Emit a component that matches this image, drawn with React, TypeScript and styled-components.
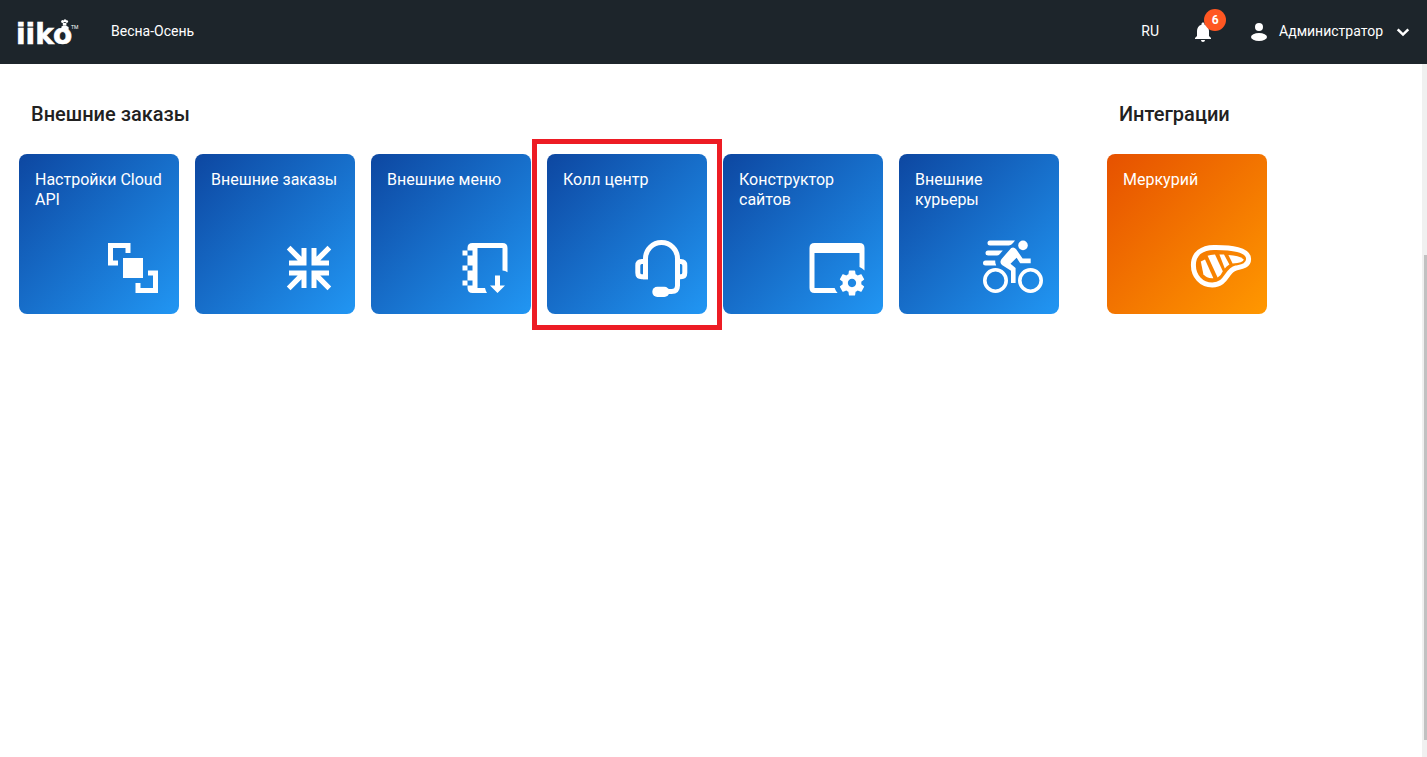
import React from "react";
import styled, { createGlobalStyle } from "styled-components";

const GlobalStyle = createGlobalStyle`
  * { box-sizing: border-box; }
  body {
    margin: 0;
    background: #fff;
    color: #212121;
    font-family: Roboto, "Liberation Sans", sans-serif;
  }
`;

const Page = styled.div`
  display: flex;
  flex-direction: column;
  min-height: 100vh;
`;

const TopBar = styled.header`
  display: flex;
  align-items: center;
  height: 64px;
  padding: 0 12px 0 16px;
  background: #1d252b;
  color: #fff;
  font-size: 14px;
  line-height: 20px;
`;

const LogoLink = styled.a`
  display: block;
  width: 64px;
  height: 40px;
  margin-right: 31px;
  color: #fff;
`;

const BarText = styled.span`
  padding-bottom: 2px;
`;

const Company = styled(BarText)`
  flex: 1;
`;

const BarButton = styled.button`
  display: flex;
  align-items: center;
  padding: 0;
  border: 0;
  background: none;
  color: inherit;
  font: inherit;
  cursor: pointer;
`;

const BellButton = styled(BarButton)`
  position: relative;
  margin: 0 36px 0 32px;
`;

const Badge = styled.span`
  position: absolute;
  top: -11px;
  right: -11px;
  width: 22px;
  height: 22px;
  border-radius: 50%;
  background: #ff5722;
  font-size: 12px;
  font-weight: 700;
  line-height: 22px;
  text-align: center;
`;

const UserName = styled(BarText)`
  margin: 0 8px 0 12px;
`;

const Body = styled.div`
  display: flex;
  flex: 1;
`;

const Groups = styled.main`
  display: flex;
  flex: 1;
  flex-wrap: wrap;
  align-content: flex-start;
  gap: 48px;
  padding: 36px 19px;
`;

const GroupTitle = styled.h2`
  margin: 0 12px 26px;
  font-size: 20px;
  font-weight: 500;
  line-height: 28px;
`;

const Tiles = styled.div`
  display: flex;
  flex-wrap: wrap;
  gap: 16px;
`;

const Tile = styled.a<{ $tone: "blue" | "orange" }>`
  position: relative;
  display: flex;
  flex-direction: column;
  justify-content: space-between;
  width: 160px;
  height: 160px;
  padding: 16px;
  border-radius: 8px;
  background: ${(p) =>
    p.$tone === "blue"
      ? "linear-gradient(135deg, #0d47a1, #2196f3)"
      : "linear-gradient(135deg, #e65100, #ff9800)"};
  color: #fff;
  font-size: 16px;
  line-height: 20px;
  text-decoration: none;
`;

const Highlight = styled.span`
  position: absolute;
  z-index: 1;
  inset: -15px -15px -16px;
  border: 5px solid #ed1c24;
  pointer-events: none;
`;

const TileIcon = styled.svg`
  align-self: flex-end;
  width: 60px;
  height: 60px;
  overflow: visible;
  fill: currentColor;
`;

const Rail = styled.div`
  display: flex;
  flex-direction: column;
  align-items: flex-end;
  width: 5px;
  background: #f0f0f0;
`;

const RailSpace = styled.div<{ $grow: number }>`
  flex: ${(p) => p.$grow} 1 0;
`;

const Thumb = styled.div`
  flex: 485 1 0;
  width: 3px;
  background: #c1c1c1;
`;

const CornersIcon = () => (
  <TileIcon viewBox="0 0 60 60" aria-hidden="true">
    <path d="M5 5H27.5V15H22.5V10H10V22.5H15V27.5H5Z" />
    <path d="M20 20H40V40H20Z" />
    <path d="M55 55H32.5V45H37.5V50H50V37.5H45V32.5H55Z" />
  </TileIcon>
);

const inwardArrow = "M22.5 10H27.5V27.5H10V22.5H18.7L7.8 11.5L11.5 7.8L22.5 18.7Z";

const ArrowsInIcon = () => (
  <TileIcon viewBox="0 0 60 60" aria-hidden="true">
    {[0, 90, 180, 270].map((turn) => (
      <path key={turn} d={inwardArrow} transform={`rotate(${turn} 30 30)`} />
    ))}
  </TileIcon>
);

const MenuBookIcon = () => (
  <TileIcon viewBox="0 0 60 60" aria-hidden="true">
    <path d="M17.5 5H47.5Q52.5 5 52.5 10V34.2Q50.3 33 47.5 32.6V10H22.5V50H30Q30.6 52.7 32 55H17.5Q12.5 55 12.5 50V47.5H17.5V42.5H12.5V32.5H17.5V27.5H12.5V17.5H17.5V12.5H12.5V10Q12.5 5 17.5 5Z" />
    <path d="M7.5 12.5h5v5h-5zM7.5 27.5h5v5h-5zM7.5 42.5h5v5h-5z" />
    <path d="M40 37.5H45V47.5H50L42.5 55L35 47.5H40Z" />
  </TileIcon>
);

const HeadsetIcon = () => (
  <TileIcon viewBox="0 0 60 60" aria-hidden="true">
    <g fill="none" stroke="currentColor" strokeWidth="5">
      <path d="M14.5 41.3V20.5A16 16 0 0 1 46.5 20.5V47.5Q46.5 53.5 40.5 53.5H37" />
      <path d="M14.5 23.5H10.8Q6.8 23.5 6.8 27.5V34.8Q6.8 38.8 10.8 38.8H17" />
      <path d="M46.5 23.5H49.8Q53.8 23.5 53.8 27.5V34.8Q53.8 38.8 49.8 38.8H46.5" />
    </g>
    <rect x="21.3" y="48.7" width="17" height="10.3" rx="5" />
  </TileIcon>
);

const SiteBuilderIcon = () => (
  <TileIcon viewBox="0 0 60 60" aria-hidden="true">
    <path d="M7.5 5H52.5Q57.5 5 57.5 10V32.4Q55.3 30.2 52.5 29V15H7.5V50H27.6Q28.6 52.8 30.6 55H7.5Q2.5 55 2.5 50V10Q2.5 5 7.5 5Z" />
    <path
      transform="translate(29.4 29.4) scale(1.3)"
      d="M19.14 12.94c.04-.3.06-.61.06-.94 0-.32-.02-.64-.07-.94l2.03-1.58c.18-.14.23-.41.12-.61l-1.92-3.32c-.12-.22-.37-.29-.59-.22l-2.39.96c-.5-.38-1.03-.7-1.62-.94l-.36-2.54c-.04-.24-.24-.41-.48-.41h-3.84c-.24 0-.43.17-.47.41l-.36 2.54c-.59.24-1.13.57-1.62.94l-2.39-.96c-.22-.08-.47 0-.59.22L2.74 8.87c-.12.21-.08.47.12.61l2.03 1.58c-.05.3-.09.63-.09.94s.02.64.07.94l-2.03 1.58c-.18.14-.23.41-.12.61l1.92 3.32c.12.22.37.29.59.22l2.39-.96c.5.38 1.03.7 1.62.94l.36 2.54c.05.24.24.41.48.41h3.84c.24 0 .44-.17.47-.41l.36-2.54c.59-.24 1.13-.56 1.62-.94l2.39.96c.22.08.47 0 .59-.22l1.92-3.32c.12-.22.07-.47-.12-.61l-2.01-1.58zM12 15.2c-1.77 0-3.2-1.43-3.2-3.2s1.43-3.2 3.2-3.2 3.2 1.43 3.2 3.2-1.43 3.2-3.2 3.2z"
    />
  </TileIcon>
);

const CourierIcon = () => (
  <TileIcon viewBox="0 0 60 60" aria-hidden="true">
    <g fill="none" stroke="currentColor" strokeWidth="3.6">
      <circle cx="12.5" cy="42.5" r="10.7" />
      <circle cx="47.5" cy="42.5" r="10.7" />
    </g>
    <circle cx="40" cy="7.4" r="4.8" />
    <path d="M7 2.4H32L30 5Q28.3 7.4 26 7.4H7A2.5 2.5 0 0 1 7 2.4Z" />
    <path d="M5 12.4H19.8L16.4 16.4Q15.4 17.4 14 17.4H5A2.5 2.5 0 0 1 5 12.4Z" />
    <path d="M2.5 22.4H12.2Q12 25 13.2 27.4H2.5A2.5 2.5 0 0 1 2.5 22.4Z" />
    <path d="M28.2 10Q30.8 8.6 33 11L39.6 20.5H47.7V25.2H37.2L33.6 19.8L27.5 25.7L32.6 30V45H28V32.8L19 27Q16.2 24.4 18.4 21.2Z" />
  </TileIcon>
);

const SteakIcon = () => (
  <TileIcon viewBox="0 0 60 60" aria-hidden="true">
    <path
      fill="none"
      stroke="currentColor"
      strokeWidth="5"
      d="M23 9.4C40 9.2 57.6 11.5 57.6 21C57.6 28.5 49 29 45 30C35 32.5 36 47 21.3 47C10 47 2.4 38 2.4 27C2.4 15.5 11 9.5 23 9.4Z"
    />
    <path d="M9.8 23.4L14 21.6L22.4 40.2Q16 40.8 12.4 36.3Z" />
    <path d="M16.6 17.8Q19 16.8 24 16.4L31.8 33.2Q30 37.6 26.6 39.6Z" />
    <path d="M28.4 16.4H33L38.4 26.6Q35.2 28.6 33.8 30.4Z" />
    <path d="M37.4 17Q47.8 17.4 52.8 21.4Q52.2 24.6 41.6 25.6Z" />
  </TileIcon>
);

const Logo = () => (
  <svg width="64" height="40" viewBox="0 0 64 40" fill="currentColor" aria-hidden="true">
    <text
      x="0"
      y="32"
      fontFamily='"DejaVu Sans", sans-serif'
      fontSize="28"
      fontWeight="700"
      stroke="currentColor"
      strokeWidth="0.6"
    >
      iiko
    </text>
    <text x="55" y="17" fontFamily="Roboto, sans-serif" fontSize="5">
      TM
    </text>
    <circle cx="46.6" cy="9.4" r="1.5" />
    <circle cx="49" cy="8.8" r="1.5" />
    <circle cx="50.8" cy="9.6" r="1.3" />
    <path d="M46.8 11h3.6v2.4h-3.6zM45.4 14.6l1.8-.8h3l2.4 1.2v2.6h-7z" />
  </svg>
);

const blueTiles = [
  { title: "Настройки Cloud API", Icon: CornersIcon },
  { title: "Внешние заказы", Icon: ArrowsInIcon },
  { title: "Внешние меню", Icon: MenuBookIcon },
  { title: "Колл центр", Icon: HeadsetIcon, highlighted: true },
  { title: "Конструктор сайтов", Icon: SiteBuilderIcon },
  { title: "Внешние курьеры", Icon: CourierIcon },
];

export default function App() {
  return (
    <Page>
      <GlobalStyle />
      <TopBar>
        <LogoLink href="#" aria-label="iiko">
          <Logo />
        </LogoLink>
        <Company>Весна-Осень</Company>
        <BarButton type="button">
          <BarText>RU</BarText>
        </BarButton>
        <BellButton type="button" aria-label="Уведомления">
          <svg width="24" height="24" viewBox="0 0 24 24" fill="currentColor" aria-hidden="true">
            <path d="M12 22c1.1 0 2-.9 2-2h-4c0 1.1.9 2 2 2zm6-6v-5c0-3.07-1.63-5.64-4.5-6.32V4c0-.83-.67-1.5-1.5-1.5s-1.5.67-1.5 1.5v.68C7.64 5.36 6 7.92 6 11v5l-2 2v1h16v-1l-2-2z" />
          </svg>
          <Badge>6</Badge>
        </BellButton>
        <BarButton type="button">
          <svg width="16" height="18" viewBox="0 0 16 18" fill="currentColor" aria-hidden="true">
            <circle cx="8" cy="4" r="4" />
            <ellipse cx="8" cy="14" rx="8" ry="4" />
          </svg>
          <UserName>Администратор</UserName>
          <svg width="24" height="24" viewBox="0 0 24 24" fill="none" stroke="currentColor" strokeWidth="2.5" aria-hidden="true">
            <path d="M6.7 9.3L12 14.6L17.3 9.3" />
          </svg>
        </BarButton>
      </TopBar>
      <Body>
        <Groups>
          <section>
            <GroupTitle>Внешние заказы</GroupTitle>
            <Tiles>
              {blueTiles.map(({ title, Icon, highlighted }) => (
                <Tile key={title} href="#" $tone="blue">
                  {title}
                  <Icon />
                  {highlighted && <Highlight />}
                </Tile>
              ))}
            </Tiles>
          </section>
          <section>
            <GroupTitle>Интеграции</GroupTitle>
            <Tiles>
              <Tile href="#" $tone="orange">
                Меркурий
                <SteakIcon />
              </Tile>
            </Tiles>
          </section>
        </Groups>
        <Rail aria-hidden="true">
          <RailSpace $grow={191} />
          <Thumb />
          <RailSpace $grow={17} />
        </Rail>
      </Body>
    </Page>
  );
}
